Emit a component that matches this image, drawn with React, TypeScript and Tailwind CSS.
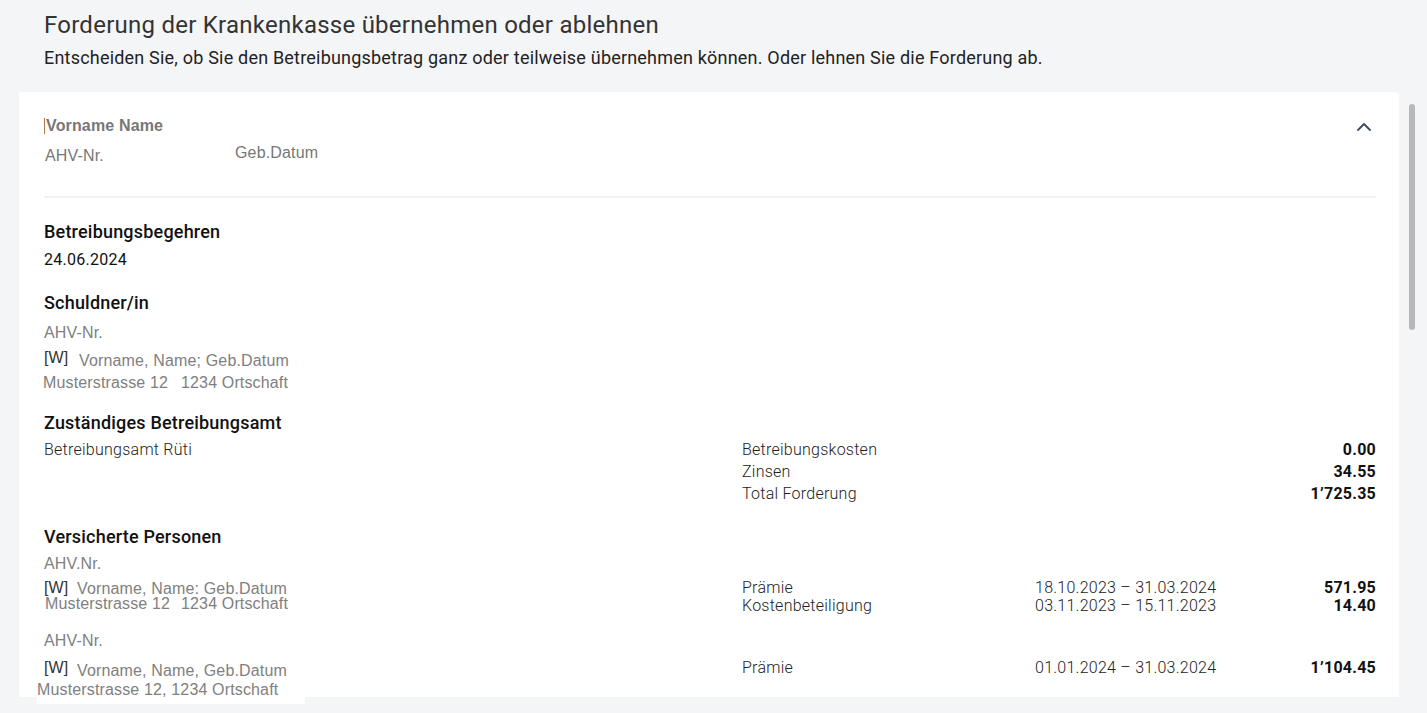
import React from "react";
import { ChevronUp } from "lucide-react";

const roboto = { fontFamily: "Roboto, 'Noto Sans', sans-serif", letterSpacing: "0.25px" };
const arial = { fontFamily: "'Liberation Sans', Arial, sans-serif", letterSpacing: "0.15px" };

function Heading({ children, className = "" }: { children: React.ReactNode; className?: string }) {
  return (
    <div className={"h-[24px] text-[18px] leading-[26px] font-medium text-[#111] " + className} style={{ ...roboto, letterSpacing: "0.2px" }}>
      {children}
    </div>
  );
}

function RightCells({ label, date, amount }: { label?: string; date?: string; amount?: string }) {
  return (
    <div className="flex flex-1 text-[16px] font-light text-[#222]" style={roboto}>
      <div className="w-[293px] whitespace-nowrap">{label}</div>
      <div className="flex-1 whitespace-nowrap">{date}</div>
      <div className="w-[120px] text-right font-bold text-[#111] whitespace-nowrap">{amount}</div>
    </div>
  );
}

export default function App() {
  return (
    <div className="h-[713px] w-[1427px] overflow-hidden bg-[#f4f5f7] flex">
      <div className="w-[1399px] flex flex-col shrink-0">
        <div className="pl-[44px] pt-[9px]">
          <h1 className="text-[24px] leading-[32px] text-[#333] font-normal" style={roboto}>
            Forderung der Krankenkasse übernehmen oder ablehnen
          </h1>
          <p className="mt-[5px] text-[18px] leading-[24px] text-[#222]" style={{ ...roboto, letterSpacing: "0.2px" }}>
            Entscheiden Sie, ob Sie den Betreibungsbetrag ganz oder teilweise übernehmen können. Oder lehnen Sie die Forderung ab.
          </p>
        </div>

        <div className="mt-[22px] ml-[19px] w-[1380px] h-[605px] shrink-0 bg-white rounded-tr-[4px] pl-[25px] pr-[23px] pt-[24px]">
          {/* Person header */}
          <div className="flex items-center h-[20px]">
            <span className="w-[1px] h-[16px] bg-[#b0784a] mr-[1px]" />
            <span className="text-[16px] leading-[22px] font-bold text-[#777]" style={arial}>
              Vorname Name
            </span>
            <div className="flex-1" />
            <ChevronUp size={24} strokeWidth={1.8} className="text-[#3a4a5c] mt-[2px]" />
          </div>
          <div className="flex mt-[7px] h-[20px] text-[16px] leading-[20px] text-[#777]" style={arial}>
            <div className="w-[191px] pl-[1px] mt-[3px]">AHV-Nr.</div>
            <div>Geb.Datum</div>
          </div>
          <div className="mt-[33px] h-[2px] bg-[#f1f1f1]" />

          {/* Betreibungsbegehren */}
          <Heading className="mt-[21px]">Betreibungsbegehren</Heading>
          <div className="mt-[6px] h-[20px] text-[16px] leading-[22px] text-[#111]" style={roboto}>
            24.06.2024
          </div>

          {/* Schuldner/in */}
          <Heading className="mt-[21px]">Schuldner/in</Heading>
          <div className="mt-[8px] h-[20px] text-[16px] leading-[22px] text-[#808080]" style={arial}>
            AHV-Nr.
          </div>
          <div className="mt-[6px] h-[22px] flex text-[16px] leading-[20px]" style={arial}>
            <span className="text-[#333] w-[35px]">[W]</span>
            <span className="text-[#808080] mt-[3px]">Vorname, Name; Geb.Datum</span>
          </div>
          <div className="mt-[2px] h-[20px] flex text-[16px] leading-[22px] text-[#808080]" style={arial}>
            <span className="w-[138px] -ml-[1px]">Musterstrasse 12</span>
            <span>1234 Ortschaft</span>
          </div>

          {/* Zuständiges Betreibungsamt */}
          <Heading className="mt-[18px]">Zuständiges Betreibungsamt</Heading>
          <div className="mt-[5px] flex">
            <div className="w-[698px] text-[16px] leading-[22px] font-light text-[#222]" style={roboto}>
              Betreibungsamt Rüti
            </div>
            <div className="flex-1 flex flex-col leading-[22px] -mb-[1px]">
              <RightCells label="Betreibungskosten" amount="0.00" />
              <RightCells label="Zinsen" amount="34.55" />
              <RightCells label="Total Forderung" amount="1’725.35" />
            </div>
          </div>

          {/* Versicherte Personen */}
          <Heading className="mt-[20px]">Versicherte Personen</Heading>
          <div className="mt-[5px] h-[20px] text-[16px] leading-[22px] text-[#808080]" style={arial}>
            AHV.Nr.
          </div>
          <div className="mt-[4px] flex h-[20px] leading-[21px]">
            <div className="w-[698px] flex text-[16px]" style={arial}>
              <span className="text-[#333] w-[33px]">[W]</span>
              <span className="text-[#808080] mt-[1px]">Vorname, Name: Geb.Datum</span>
            </div>
            <RightCells label="Prämie" date="18.10.2023 – 31.03.2024" amount="571.95" />
          </div>
          <div className="flex h-[16px] leading-[17px]">
            <div className="w-[698px] flex text-[16px] text-[#808080] -mt-[2px]" style={arial}>
              <span className="w-[137px] pl-[1px]">Musterstrasse 12</span>
              <span>1234 Ortschaft</span>
            </div>
            <RightCells label="Kostenbeteiligung" date="03.11.2023 – 15.11.2023" amount="14.40" />
          </div>

          <div className="mt-[17px] h-[20px] text-[16px] leading-[22px] text-[#808080]" style={arial}>
            AHV-Nr.
          </div>
          <div className="mt-[7px] flex h-[22px] leading-[21px]">
            <div className="w-[698px] flex text-[16px]" style={arial}>
              <span className="text-[#333] w-[33px]">[W]</span>
              <span className="text-[#808080] mt-[3px]">Vorname, Name, Geb.Datum</span>
            </div>
            <RightCells label="Prämie" date="01.01.2024 – 31.03.2024" amount="1’104.45" />
          </div>
          <div className="-ml-[7px] w-[268px] h-[25px] bg-white text-[16px] leading-[22px] text-[#808080]" style={arial}>
            Musterstrasse 12, 1234 Ortschaft
          </div>
        </div>
      </div>
      <div className="flex-1 pt-[104px] pl-[10px]">
        <div className="w-[6px] h-[226px] rounded-full bg-[#b8b8ba]" />
      </div>
    </div>
  );
}
